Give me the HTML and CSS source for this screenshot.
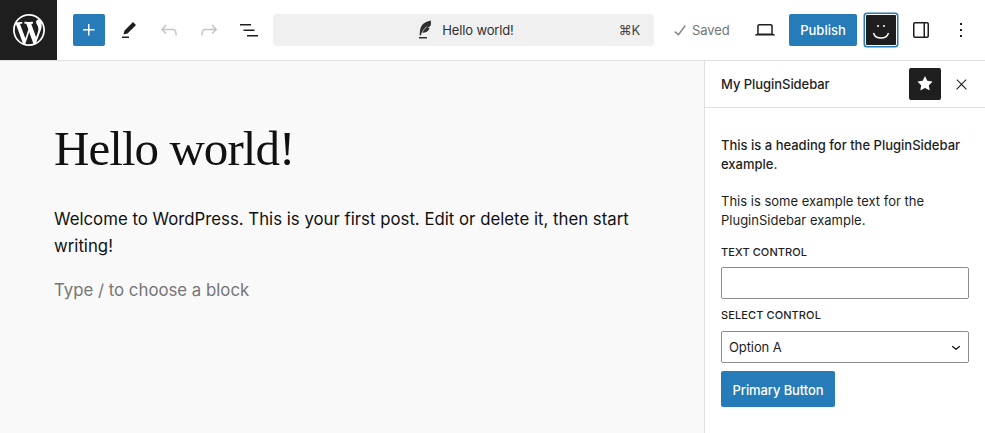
FILE: index.html
```html
<!DOCTYPE html>
<html lang="en">
<head>
<meta charset="utf-8">
<title>Hello world!</title>
<link rel="stylesheet" href="styles.css">
</head>
<body>
<div class="app">
  <header class="topbar">
    <a class="logo"><svg width="32" height="32" viewBox="0 0 20 20"><path fill="#fff" d="M20 10c0-5.51-4.49-10-10-10C4.48 0 0 4.49 0 10c0 5.52 4.48 10 10 10 5.51 0 10-4.48 10-10zM7.78 15.37L4.37 6.22c.55-.02 1.17-.08 1.17-.08.5-.06.44-1.13-.06-1.11 0 0-1.45.11-2.37.11-.18 0-.37 0-.58-.01C4.12 2.69 6.87 1.11 10 1.11c2.33 0 4.45.87 6.05 2.34-.68-.11-1.65.39-1.65 1.58 0 .74.45 1.36.9 2.1.35.61.55 1.36.55 2.46 0 1.49-1.4 5-1.4 5l-3.03-8.37c.54-.02.82-.17.82-.17.5-.05.44-1.25-.06-1.22 0 0-1.44.12-2.38.12-.87 0-2.33-.12-2.33-.12-.5-.03-.56 1.2-.06 1.22l.92.08 1.26 3.41zM17.41 10c.24-.64.74-1.87.43-4.25.7 1.29 1.05 2.71 1.05 4.25 0 3.29-1.73 6.24-4.4 7.78.97-2.59 1.94-5.2 2.92-7.78zM6.1 18.09C3.12 16.65 1.11 13.53 1.11 10c0-1.3.23-2.48.72-3.59C3.25 10.3 4.67 14.2 6.1 18.09zm4.03-6.63l2.58 6.98c-.86.29-1.76.45-2.71.45-.79 0-1.57-.11-2.29-.33.81-2.38 1.62-4.74 2.42-7.1z"/></svg></a>
    <div class="tools">
      <button class="icon-btn primary"><svg class="ico" viewBox="0 0 24 24"><path d="M11 12.5V17.5H12.5V12.5H17.5V11H12.5V6H11V11H6V12.5H11Z"/></svg></button>
      <button class="icon-btn"><svg class="ico" viewBox="0 0 24 24"><path d="m19 7-3-3-8.5 8.5-1 4 4-1L19 7Zm-7 11.5H5V20h7v-1.5Z"/></svg></button>
      <button class="icon-btn muted"><svg class="ico" viewBox="0 0 24 24"><path d="M18.3 11.7c-.6-.6-1.4-.9-2.3-.9H6.7l2.9-3.3-1.1-1-4.5 5L8.5 16l1-1-2.7-2.7H16c.5 0 .9.2 1.3.5 1 1 1 3.4 1 4.5v.3h1.5v-.2c0-1.5 0-4.3-1.5-5.7z"/></svg></button>
      <button class="icon-btn muted"><svg class="ico" viewBox="0 0 24 24"><path d="M15.6 6.5l-1.1 1 2.9 3.3H8c-.9 0-1.7.3-2.3.9-1.4 1.5-1.4 4.2-1.4 5.6v.2h1.5v-.3c0-1.1 0-3.5 1-4.5.3-.3.7-.5 1.3-.5h9.2L14.5 15l1.1 1.1 4.6-4.6-4.6-5z"/></svg></button>
      <button class="icon-btn"><svg class="ico" viewBox="0 0 24 24"><path d="M3 6h11v1.5H3V6Zm3.5 5.5h11V13h-11v-1.5ZM21 17H10v1.5h11V17Z"/></svg></button>
    </div>
    <div class="command">
      <div class="command-title">
        <svg class="ico" viewBox="0 0 24 24"><path d="M5 20.500h8V19H5z"/><path d="M17.500 2.500c-4.500.5-8.500 2.500-10.500 6.500-.8 1.700-1 3.600-1.200 6-.05.8-.1 1.500-.2 2.200l1.300.3c.3-1 .6-1.900 1-2.700 3 .3 5.500-.7 7-3 .4-.7.6-1.300.7-2-.8.200-1.500.2-2.200.1 1.100-.4 2.300-1.200 3.200-2.300.5-1.500.5-3.300.1-5.100z"/><path class="vein" d="M7.800 15.500c1-2.600 2.600-5 5-7"/></svg>
        <span class="doc-name">Hello world!</span>
      </div>
      <span class="kbd">⌘K</span>
    </div>
    <div class="actions">
      <span class="saved"><svg class="ico" viewBox="0 0 24 24"><path d="M16.7 7.1l-6.3 8.500-3.300-2.500-.9 1.200 4.500 3.400L17.900 8z"/></svg>Saved</span>
      <button class="icon-btn preview"><svg class="ico" viewBox="0 0 24 24"><path d="M20.5 16h-.7V8c0-1.100-.9-2-2-2H6.200c-1.100 0-2 .9-2 2v8h-.7c-.8 0-1.500.7-1.500 1.500h20c0-.8-.7-1.500-1.500-1.500zM5.700 8c0-.3.2-.5.5-.5h11.600c.3 0 .5.2.5.5v7.600H5.700V8z"/></svg></button>
      <button class="publish">Publish</button>
      <button class="icon-btn smiley"><svg width="24" height="24" viewBox="0 0 24 24" fill="none" stroke="#fff"><path stroke-width="1.300" d="M8 8h2M14 8h2"/><path stroke-width="1.400" d="M4.500 15c1 3.300 4 5 7.500 5s6.500-1.700 7.500-5"/></svg></button>
      <button class="icon-btn panel"><svg class="ico" viewBox="0 0 24 24"><path fill-rule="evenodd" d="M18 4H6c-1.100 0-2 .9-2 2v12c0 1.100.9 2 2 2h12c1.100 0 2-.9 2-2V6c0-1.100-.9-2-2-2zM6 5.500h8.500v13H6c-.3 0-.5-.2-.5-.5V6c0-.3.2-.5.5-.5zm12.500 12.500c0 .3-.2.5-.5.5h-2v-13h2c.3 0 .5.2.5.5v12z"/></svg></button>
      <button class="icon-btn more"><svg class="ico" viewBox="0 0 24 24"><path d="M13 19h-2v-2h2v2zm0-6h-2v-2h2v2zm0-6h-2V5h2v2z"/></svg></button>
    </div>
  </header>
  <div class="workspace">
    <main class="editor">
      <h1 class="post-title">Hello world!</h1>
      <p class="post-text">Welcome to WordPress. This is your first post. Edit or delete it, then start writing!</p>
      <p class="post-hint">Type / to choose a block</p>
    </main>
    <aside class="sidebar">
      <div class="sidebar-head">
        <span class="sidebar-title">My PluginSidebar</span>
        <button class="icon-btn star"><svg class="ico" viewBox="0 0 24 24"><path d="M11.776 4.454a.25.25 0 01.448 0l2.069 4.192a.25.25 0 00.188.137l4.626.672a.25.25 0 01.139.426l-3.348 3.263a.25.25 0 00-.072.222l.79 4.607a.25.25 0 01-.362.263l-4.138-2.175a.25.25 0 00-.232 0l-4.138 2.175a.25.25 0 01-.363-.263l.79-4.607a.25.25 0 00-.071-.222L4.754 9.881a.25.25 0 01.139-.426l4.626-.672a.25.25 0 00.188-.137l2.069-4.192z"/></svg></button>
        <button class="icon-btn close"><svg class="ico close-ico" viewBox="0 0 24 24"><path d="M13 11.800l6.100-6.300-1-1-6.100 6.200-6.100-6.200-1 1 6.100 6.300-6.500 6.700 1 1 6.500-6.600 6.500 6.600 1-1z"/></svg></button>
      </div>
      <div class="sidebar-body">
        <h2 class="side-heading">This is a heading for the PluginSidebar example.</h2>
        <p class="side-text">This is some example text for the PluginSidebar example.</p>
        <label class="field-label" for="tc">Text Control</label>
        <input class="field-input" id="tc" type="text">
        <label class="field-label select-label" for="sc">Select Control</label>
        <div class="select-field" id="sc">
          <span>Option A</span>
          <svg width="18" height="18" viewBox="0 0 24 24"><path d="M17.500 11.600 12 16l-5.500-4.400.9-1.200 4.600 3.600 4.600-3.600z"/></svg>
        </div>
        <button class="primary-btn">Primary Button</button>
      </div>
    </aside>
  </div>
</div>
</body>
</html>
```
FILE: styles.css
```css
* { box-sizing: border-box; }
html, body { margin: 0; height: 100%; overflow: hidden; }
body { font-family: Inter, "Liberation Sans", sans-serif; font-size: 13px; color: #1e1e1e; background: #fff; -webkit-font-smoothing: antialiased; }
button { font: inherit; border: 0; background: none; padding: 0; }
.app { display: flex; flex-direction: column; height: 433px; }
.topbar { display: flex; align-items: center; height: 61px; border-bottom: 1px solid #e0e0e0; flex: none; }
.logo { width: 57px; height: 60px; background: #1e1e1e; display: flex; align-items: center; justify-content: center; flex: none; }
.tools { display: flex; align-items: center; margin-left: 16px; gap: 8px; }
.icon-btn { width: 32px; height: 32px; display: flex; align-items: center; justify-content: center; border-radius: 2px; color: #1e1e1e; flex: none; }
.ico { width: 24px; height: 24px; fill: currentColor; display: block; }
.primary { background: #267bb9; color: #fff; }
.muted { color: #c4c4c4; }
.command { margin-left: 8px; width: 381px; height: 32px; background: #f0f0f0; border-radius: 4px; display: flex; align-items: center; position: relative; justify-content: center; color: #2f2f2f; flex: none; }
.command-title { display: flex; align-items: center; gap: 4px; padding-left: 1px; }
.doc-name { letter-spacing: -.15px; }
.vein { fill: none; stroke: #f0f0f0; stroke-width: .7; }
.kbd { position: absolute; right: 14px; top: 8px; line-height: 16px; color: #444; letter-spacing: -.2px; }
.actions { display: flex; align-items: center; margin-left: 19px; }
.saved { display: flex; align-items: center; color: #757575; width: 60px; letter-spacing: -.1px; }
.saved .ico { color: #8a8a8a; margin-left: -5px; flex: none; }
.preview { margin-left: 16px; }
.publish { margin-left: 8px; width: 68px; height: 32px; background: #267bb9; color: #fff; font-weight: 500; border-radius: 2px; }
.smiley { margin-left: 8px; background: #1e1e1e; box-shadow: inset 0 0 0 1px #fff, 0 0 0 1.5px #267bb9; }
.panel { margin-left: 8px; }
.more { margin-left: 8px; }
.workspace { flex: 1; display: flex; min-height: 0; }
.editor { flex: 1; background: #f9f9f9; padding: 57px 54px 0; min-width: 0; }
.post-title { font-family: "Liberation Serif", serif; font-weight: 400; font-size: 49px; line-height: 62px; margin: 0 0 26px; color: #111; letter-spacing: -.95px; }
.post-text { font-size: 16.8px; line-height: 27px; margin: 0 0 17px; color: #111; max-width: 590px; }
.post-hint { font-size: 16.8px; line-height: 27px; margin: 0; color: #757575; }
.sidebar { width: 281px; flex: none; border-left: 1px solid #e0e0e0; background: #fff; display: flex; flex-direction: column; }
.sidebar-head { height: 47px; border-bottom: 1px solid #e0e0e0; display: flex; align-items: center; padding: 0 8px 0 16px; gap: 4px; flex: none; }
.sidebar-title { flex: 1; font-weight: 500; letter-spacing: -.05px; }
.star { background: #1e1e1e; color: #fff; }
.close-ico { width: 17px; height: 17px; }
.sidebar-body { padding: 28px 16px 0; display: flex; flex-direction: column; align-items: flex-start; }
.side-heading { font-size: 13px; font-weight: 500; line-height: 19px; margin: 0 0 18px; }
.side-text { margin: 0 0 14px; line-height: 19px; }
.field-label { font-size: 11px; font-weight: 500; text-transform: uppercase; line-height: 16px; letter-spacing: .1px; margin-bottom: 7px; }
.select-label { margin-top: 8px; margin-bottom: 8px; }
.field-input { width: 248px; height: 32px; border: 1px solid #8c8c8c; border-radius: 2px; background: #fff; padding: 0 8px; display: block; }
.select-field { width: 248px; height: 32px; border: 1px solid #8c8c8c; border-radius: 2px; background: #fff; display: flex; align-items: center; justify-content: space-between; padding: 0 3px 0 7px; letter-spacing: -.1px; }
.primary-btn { margin-top: 8px; width: 114px; height: 36px; padding-top: 1px; background: #267bb9; color: #fff; font-weight: 500; border-radius: 2px; letter-spacing: -.1px; }
```
